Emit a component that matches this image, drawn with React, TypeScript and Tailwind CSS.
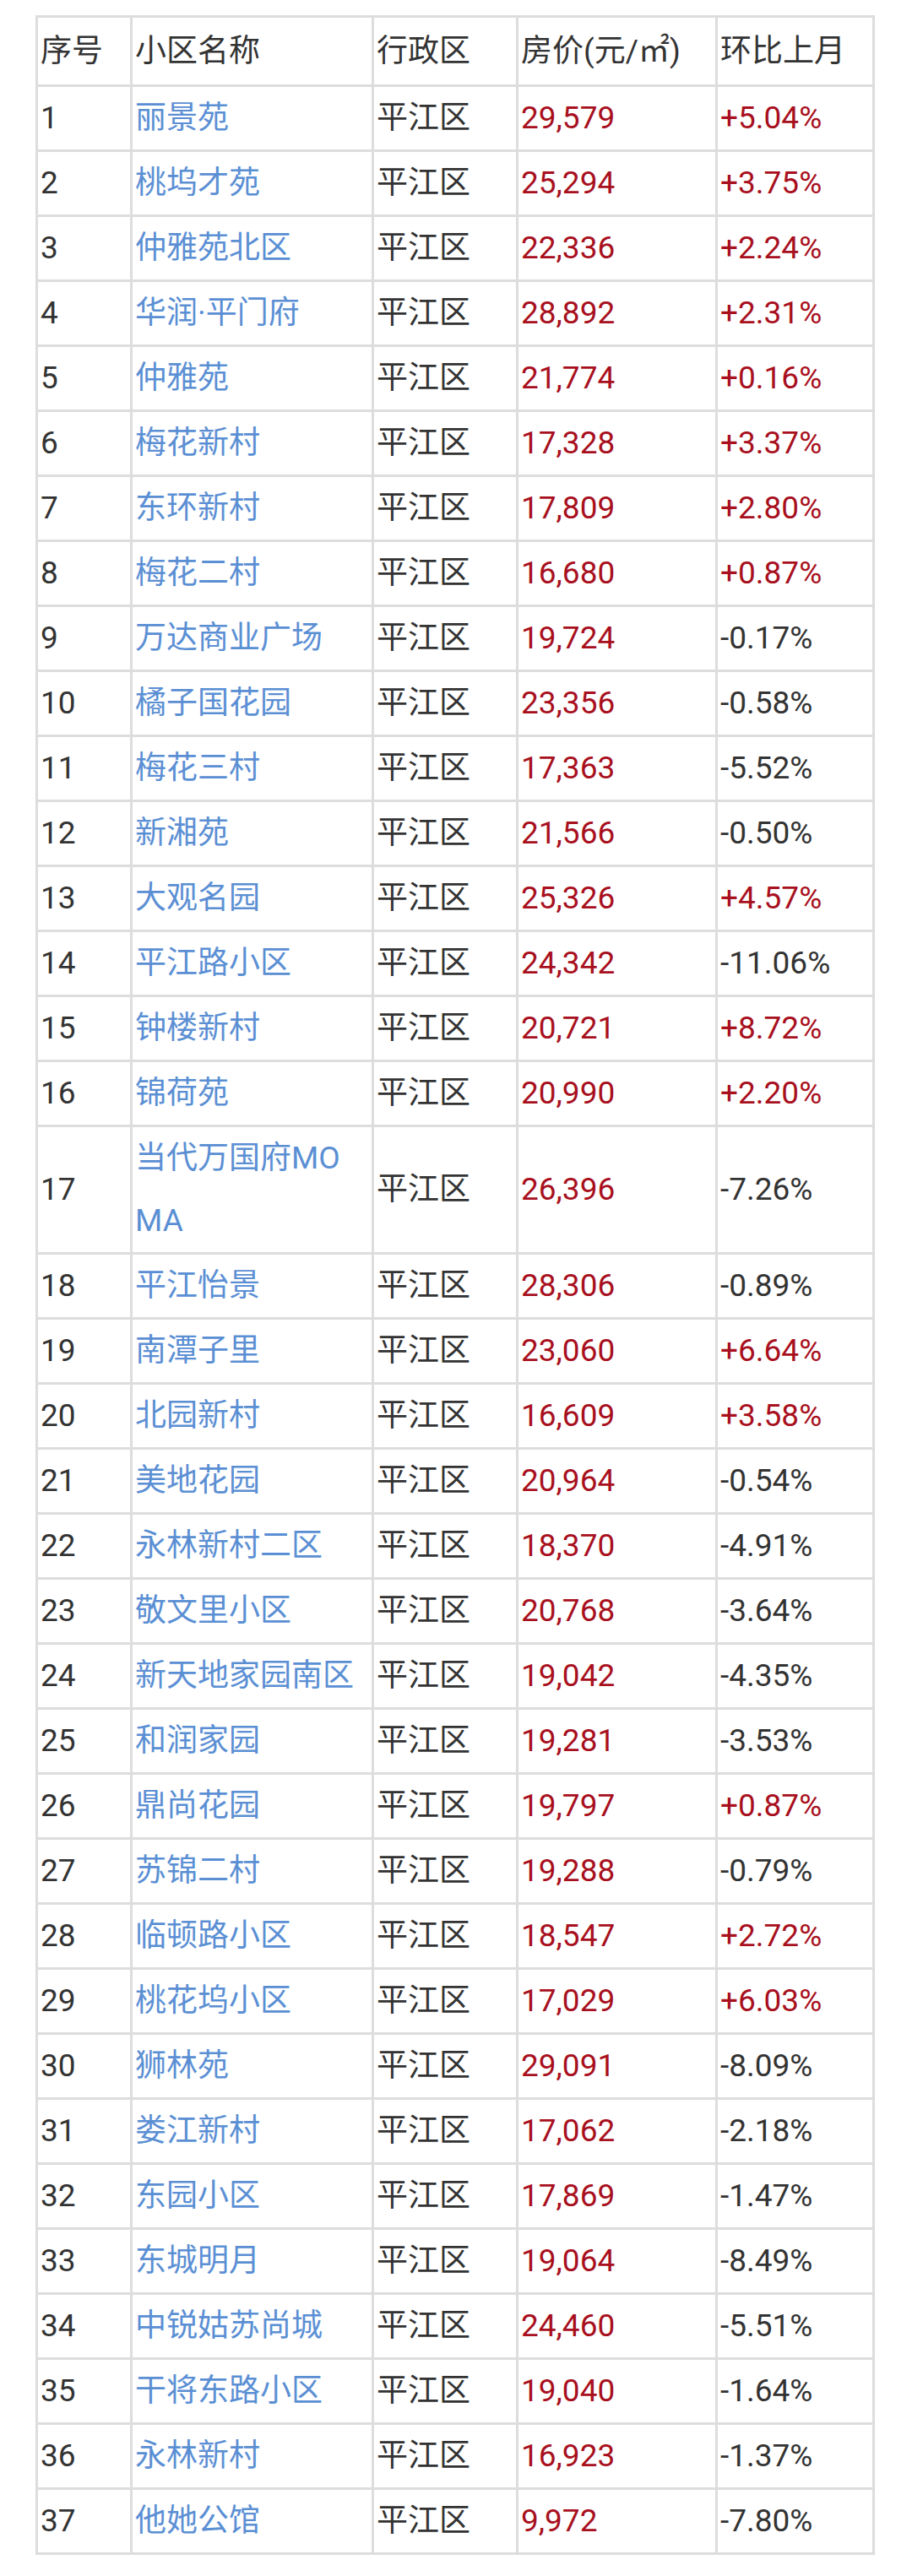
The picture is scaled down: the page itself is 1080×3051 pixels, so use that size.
const rows: [string, string, string][] = [
  ["丽景苑", "29,579", "+5.04%"],
  ["桃坞才苑", "25,294", "+3.75%"],
  ["仲雅苑北区", "22,336", "+2.24%"],
  ["华润·平门府", "28,892", "+2.31%"],
  ["仲雅苑", "21,774", "+0.16%"],
  ["梅花新村", "17,328", "+3.37%"],
  ["东环新村", "17,809", "+2.80%"],
  ["梅花二村", "16,680", "+0.87%"],
  ["万达商业广场", "19,724", "-0.17%"],
  ["橘子国花园", "23,356", "-0.58%"],
  ["梅花三村", "17,363", "-5.52%"],
  ["新湘苑", "21,566", "-0.50%"],
  ["大观名园", "25,326", "+4.57%"],
  ["平江路小区", "24,342", "-11.06%"],
  ["钟楼新村", "20,721", "+8.72%"],
  ["锦荷苑", "20,990", "+2.20%"],
  ["当代万国府MOMA", "26,396", "-7.26%"],
  ["平江怡景", "28,306", "-0.89%"],
  ["南潭子里", "23,060", "+6.64%"],
  ["北园新村", "16,609", "+3.58%"],
  ["美地花园", "20,964", "-0.54%"],
  ["永林新村二区", "18,370", "-4.91%"],
  ["敬文里小区", "20,768", "-3.64%"],
  ["新天地家园南区", "19,042", "-4.35%"],
  ["和润家园", "19,281", "-3.53%"],
  ["鼎尚花园", "19,797", "+0.87%"],
  ["苏锦二村", "19,288", "-0.79%"],
  ["临顿路小区", "18,547", "+2.72%"],
  ["桃花坞小区", "17,029", "+6.03%"],
  ["狮林苑", "29,091", "-8.09%"],
  ["娄江新村", "17,062", "-2.18%"],
  ["东园小区", "17,869", "-1.47%"],
  ["东城明月", "19,064", "-8.49%"],
  ["中锐姑苏尚城", "24,460", "-5.51%"],
  ["干将东路小区", "19,040", "-1.64%"],
  ["永林新村", "16,923", "-1.37%"],
  ["他她公馆", "9,972", "-7.80%"],
];

const cell = "border-r-[3px] border-b-[3px] border-[#dddddd] pl-[3px] flex items-center";

function App() {
  return (
    <div
      className="w-[1080px] min-h-[3051px] bg-white pt-[18px] pl-[42px] text-[37px] leading-[74px] text-[#333333]"
      style={{ fontFamily: "Roboto, 'Noto Sans CJK SC', sans-serif" }}
    >
      <div className="grid grid-cols-[112px_286px_171px_236px_186px] w-fit border-l-[3px] border-t-[3px] border-[#dddddd]">
        <div className={`${cell} h-[82px]`}>序号</div>
        <div className={`${cell} h-[82px]`}>小区名称</div>
        <div className={`${cell} h-[82px]`}>行政区</div>
        <div className={`${cell} h-[82px]`}>房价(元/㎡)</div>
        <div className={`${cell} h-[82px]`}>环比上月</div>
        {rows.map(([name, price, change], i) => (
          <div key={i} className="contents">
            <div className={cell}>{i + 1}</div>
            <div className={`${cell} text-[#5b8fd4]`}>
              {name === "当代万国府MOMA" ? (
                <span>
                  当代万国府MO
                  <br />
                  MA
                </span>
              ) : (
                name
              )}
            </div>
            <div className={cell}>平江区</div>
            <div className={`${cell} text-[#a8101e]`}>{price}</div>
            <div className={`${cell} ${change.startsWith("+") ? "text-[#a8101e]" : ""}`}>{change}</div>
          </div>
        ))}
      </div>
    </div>
  );
}

export default App;
